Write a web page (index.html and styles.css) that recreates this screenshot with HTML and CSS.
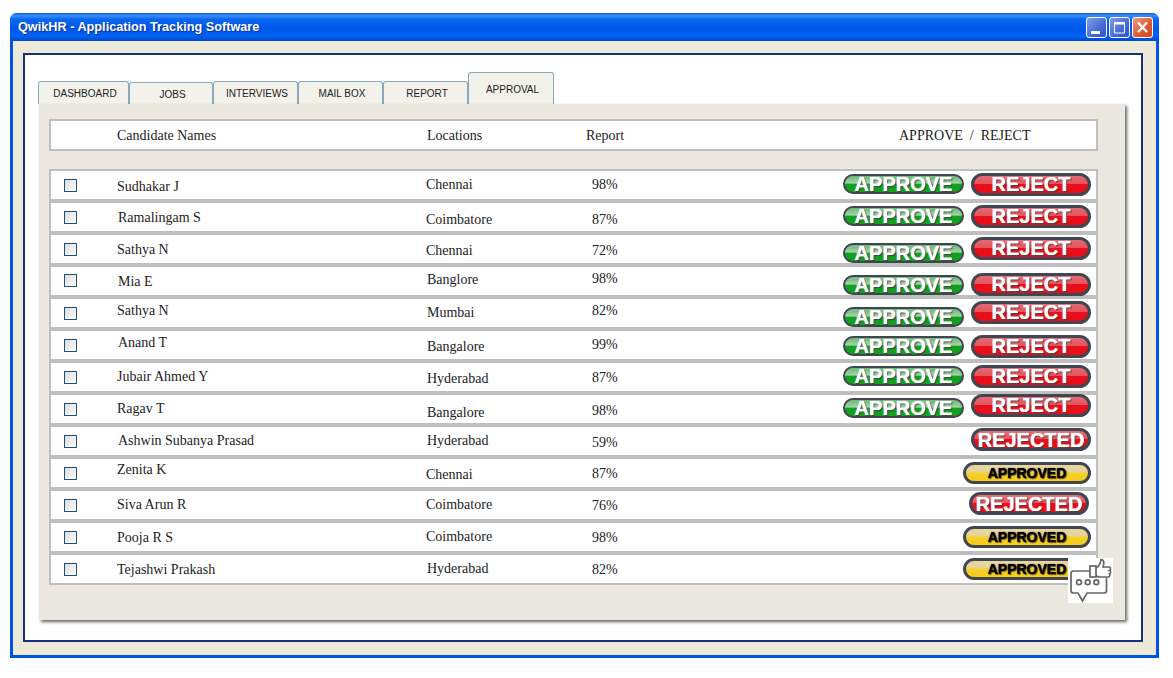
FILE: index.html
```html
<!DOCTYPE html>
<html lang="en">
<head>
    <meta charset="UTF-8">
    <title>QwikHR - Application Tracking Software</title>
    <link rel="stylesheet" href="styles.css">
</head>
<body>

<div class="window">
    <div class="titlebar">
        <span class="title">QwikHR - Application Tracking Software</span>
        <div class="win-buttons">
            <span class="win-btn"><svg width="19" height="19" viewBox="0 0 19 19"><rect x="4" y="13" width="9" height="3" fill="#fff"/></svg></span>
            <span class="win-btn"><svg width="19" height="19" viewBox="0 0 19 19"><path d="M4.5 5h10v10h-10z" fill="none" stroke="#fff"/><rect x="4" y="4" width="11" height="2.5" fill="#fff"/></svg></span>
            <span class="win-btn close"><svg width="19" height="19" viewBox="0 0 19 19"><path d="M5 4.5l9 9.5M14 4.5l-9 9.5" stroke="#fff" stroke-width="2.2"/></svg></span>
        </div>
    </div>

    <div class="content">
        <nav class="tabs">
            <a class="tab t-dashboard">DASHBOARD</a>
            <a class="tab t-jobs">JOBS</a>
            <a class="tab">INTERVIEWS</a>
            <a class="tab">MAIL BOX</a>
            <a class="tab">REPORT</a>
            <a class="tab active">APPROVAL</a>
        </nav>

        <div class="panel">
            <div class="list-head">
                <span>Candidate Names</span>
                <span>Locations</span>
                <span>Report</span>
                <span class="head-action">APPROVE &nbsp;/&nbsp; REJECT</span>
            </div>

            <div class="list">
                <div class="row">
                    <input type="checkbox" class="check">
                    <span class="mt7">Sudhakar J</span><span class="mt5">Chennai</span><span class="mt5">98%</span>
                    <div class="actions"><span class="pill approve mt3">APPROVE</span><span class="pill reject mt2">REJECT</span></div>
                </div>
                <div class="row">
                    <input type="checkbox" class="check">
                    <span class="mt6 x1">Ramalingam S</span><span class="mt8">Coimbatore</span><span class="mt8">87%</span>
                    <div class="actions"><span class="pill approve mt3">APPROVE</span><span class="pill reject mt2">REJECT</span></div>
                </div>
                <div class="row">
                    <input type="checkbox" class="check">
                    <span class="mt6">Sathya N</span><span class="mt7">Chennai</span><span class="mt7">72%</span>
                    <div class="actions"><span class="pill approve mt8">APPROVE</span><span class="pill reject mt2">REJECT</span></div>
                </div>
                <div class="row">
                    <input type="checkbox" class="check check-up">
                    <span class="mt6 x1">Mia E</span><span class="mt4 x1">Banglore</span><span class="mt3">98%</span>
                    <div class="actions"><span class="pill approve mt8">APPROVE</span><span class="pill reject mt6">REJECT</span></div>
                </div>
                <div class="row">
                    <input type="checkbox" class="check">
                    <span class="mt3">Sathya N</span><span class="mt5 x1">Mumbai</span><span class="mt3">82%</span>
                    <div class="actions"><span class="pill approve mt8">APPROVE</span><span class="pill reject mt2">REJECT</span></div>
                </div>
                <div class="row">
                    <input type="checkbox" class="check">
                    <span class="mt3 x1">Anand T</span><span class="mt7 x1">Bangalore</span><span class="mt5">99%</span>
                    <div class="actions"><span class="pill approve mt5">APPROVE</span><span class="pill reject mt4">REJECT</span></div>
                </div>
                <div class="row">
                    <input type="checkbox" class="check">
                    <span class="mt5">Jubair Ahmed Y</span><span class="mt7 x1">Hyderabad</span><span class="mt6">87%</span>
                    <div class="actions"><span class="pill approve mt3">APPROVE</span><span class="pill reject mt2">REJECT</span></div>
                </div>
                <div class="row">
                    <input type="checkbox" class="check">
                    <span class="mt5">Ragav T</span><span class="mt9 x1">Bangalore</span><span class="mt7">98%</span>
                    <div class="actions"><span class="pill approve mt3">APPROVE</span><span class="pill reject up1">REJECT</span></div>
                </div>
                <div class="row">
                    <input type="checkbox" class="check">
                    <span class="mt5 x1">Ashwin Subanya Prasad</span><span class="mt5 x1">Hyderabad</span><span class="mt7">59%</span>
                    <div class="actions"><span class="pill rejected mt1">REJECTED</span></div>
                </div>
                <div class="row">
                    <input type="checkbox" class="check">
                    <span class="mt2">Zenita K</span><span class="mt7">Chennai</span><span class="mt6">87%</span>
                    <div class="actions"><span class="pill approved mt3">APPROVED</span></div>
                </div>
                <div class="row">
                    <input type="checkbox" class="check">
                    <span class="mt5">Siva Arun R</span><span class="mt5">Coimbatore</span><span class="mt6">76%</span>
                    <div class="actions"><span class="pill rejected mt1 shift">REJECTED</span></div>
                </div>
                <div class="row">
                    <input type="checkbox" class="check">
                    <span class="mt6">Pooja R S</span><span class="mt5">Coimbatore</span><span class="mt6">98%</span>
                    <div class="actions"><span class="pill approved mt3">APPROVED</span></div>
                </div>
                <div class="row">
                    <input type="checkbox" class="check">
                    <span class="mt6">Tejashwi Prakash</span><span class="mt5 x1">Hyderabad</span><span class="mt6">82%</span>
                    <div class="actions"><span class="pill approved mt3">APPROVED</span></div>
                </div>
            </div>

            <!-- feedback icon sits over the last row -->
            <div class="feedback">
                <svg width="45" height="45" viewBox="0 0 45 45" fill="none" stroke="#666" stroke-width="1.7">
                    <path d="M22 13H5.5A2.5 2.5 0 0 0 3 15.5V32.500A2.500 2.500 0 0 0 5.500 35H10L14.500 43 19 35H36A2.500 2.500 0 0 0 38.500 32.500V20"/>
                    <circle cx="11" cy="24.300" r="2.400"/>
                    <circle cx="19.700" cy="24.300" r="2.400"/>
                    <circle cx="28.300" cy="24.300" r="2.400"/>
                    <rect x="22" y="8" width="6" height="11"/>
                    <path d="M28 10C31 8.500 32.500 6 33 1.500C36 1.500 36.500 5 35 9H41C43 9 43 12 41.500 12.500C43 13 43 15.500 41.500 16C42.500 17 41.500 19 40 19H32C30 19 29 18 28 17.500"/>
                </svg>
            </div>
        </div>
    </div>
</div>

</body>
</html>
```

FILE: styles.css
```css
html, body {
    margin: 0;
    padding: 0;
    background-color: #fff;
    overflow: hidden;
}
body {
    padding: 13px 14px 20px 10px;
    font-family: "Liberation Serif", "Times New Roman", serif;
    font-size: 14px;
    color: #222;
}

/* outer XP style window */
.window {
    width: 1149px;
    height: 645px;
    box-sizing: border-box;
    display: flex;
    flex-direction: column;
    background-color: #ece9d8;
    border: solid #0053e4;
    border-width: 0 3px 3px 3px;
    border-radius: 7px 7px 0 0;
}
.titlebar {
    height: 28px;
    margin: 0 -3px;
    padding: 0 6px 0 8px;
    display: flex;
    align-items: center;
    justify-content: space-between;
    flex-shrink: 0;
    border-radius: 7px 7px 0 0;
    background: linear-gradient(to bottom, #0a5be0 0%, #3a8ff7 10%, #0a66f2 22%, #0058ea 55%, #0062f5 82%, #0048d0 100%);
}
.title {
    font-family: "Liberation Sans", Arial, sans-serif;
    font-weight: bold;
    font-size: 12.7px;
    color: #fff;
    text-shadow: 1px 1px 1px #0f2f90;
}
.win-buttons {
    display: flex;
    gap: 2px;
}
.win-btn {
    width: 19px;
    height: 19px;
    border: 1px solid #fff;
    border-radius: 3px;
    display: block;
    background: linear-gradient(135deg, #7f9fe8, #3c62d6 70%, #3458cc);
}
.win-btn svg {
    display: block;
}
.win-btn.close {
    background: linear-gradient(135deg, #eb9c82, #dd5a32 60%, #cf4420);
}

/* white area inside the window */
.content {
    flex: 1;
    margin: 12px 13px 13px 10px;
    padding: 17px 17px 20px 13px;
    background-color: #fff;
    border: 2px solid #1a2f80;
}

.tabs {
    display: flex;
    align-items: flex-end;
    height: 32px;
}
.tab {
    box-sizing: border-box;
    width: 85px;
    height: 23px;
    padding: 5px 0 0 3px;
    text-align: center;
    font-family: "Liberation Sans", Arial, sans-serif;
    font-size: 10px;
    line-height: 14px;
    color: #222;
    background-color: #f3f2ea;
    border: 1px solid #8aa8bc;
    border-bottom: none;
    border-radius: 3px 3px 0 0;
}
.t-dashboard {
    width: 91px;
}
.t-jobs {
    width: 84px;
    height: 22px;
}
.tab.active {
    width: 86px;
    height: 32px;
    padding-top: 10px;
}

.panel {
    position: relative;
    box-sizing: border-box;
    width: 1086px;
    height: 516px;
    margin-left: 1px;
    padding: 15px 27px 0 10px;
    background-color: #ebe8e1;
    box-shadow: 2px 2px 3px #666;
}

.list-head {
    height: 26px;
    margin-bottom: 18px;
    display: grid;
    grid-template-columns: 310px 159px 313px auto;
    padding: 2px 0 0 66px;
    align-items: center;
    line-height: 16px;
    background-color: #fff;
    border: 2px solid #bfbfbf;
}

.list {
    display: flex;
    flex-direction: column;
    gap: 4px;
    background-color: #bfbfbf;
    border: 2px solid #bfbfbf;
}
.row {
    height: 28px;
    display: grid;
    grid-template-columns: 53px 309px 166px 39px 1fr;
    align-items: start;
    padding-left: 13px;
    line-height: 18px;
    white-space: nowrap;
    background-color: #fff;
}
.check {
    appearance: none;
    box-sizing: border-box;
    width: 13px;
    height: 13px;
    margin: 8px 0 0 0;
    border: 1px solid #1c5180;
    background: linear-gradient(135deg, #dcdcd7, #fff);
}
.check-up {
    margin-top: 7px;
}

.actions {
    display: flex;
    justify-content: flex-end;
    align-items: flex-start;
    gap: 7px;
    padding-right: 5px;
    line-height: 16px;
}

.pill {
    box-sizing: border-box;
    display: block;
    border: 3px solid #414650;
    border-radius: 12px;
    text-align: center;
    font-family: "Liberation Sans", Arial, sans-serif;
    font-weight: bold;
    font-size: 20px;
    color: #fff;
    text-shadow: 0 0 1px #fff, 1px 1px 1px #333;
}
.approve {
    width: 121px;
    height: 20px;
    border-width: 2px;
    line-height: 17px;
    background: linear-gradient(to bottom, #6cb878 0%, #a4d4aa 45%, #12a01e 50%, #12a01e 100%);
}
.reject {
    width: 120px;
    height: 23px;
    line-height: 16px;
    background: linear-gradient(to bottom, #e56b74 0%, #e2545e 45%, #e80f18 50%, #e80f18 100%);
}
.rejected {
    width: 120px;
    height: 23px;
    line-height: 18px;
    background: linear-gradient(to bottom, #e67078 0%, #e2545e 45%, #e80f18 50%, #e80f18 100%);
}
.approved {
    width: 128px;
    height: 22px;
    font-size: 14px;
    line-height: 16px;
    color: #000;
    text-shadow: 0 0 1px #000, 1px 1px 1px #6b5a10;
    background: linear-gradient(to bottom, #e8d7a4 0%, #e6d29a 45%, #f8d020 50%, #f6cc1c 100%);
}
.shift {
    margin-right: 2px;
}

/* mockup rows are not quite aligned, these keep the offsets */
.up1 { margin-top: -1px; }
.mt1 { margin-top: 1px; }
.mt2 { margin-top: 2px; }
.mt3 { margin-top: 3px; }
.mt4 { margin-top: 4px; }
.mt5 { margin-top: 5px; }
.mt6 { margin-top: 6px; }
.mt7 { margin-top: 7px; }
.mt8 { margin-top: 8px; }
.mt9 { margin-top: 9px; }
.x1 { margin-left: 1px; }

.feedback {
    position: absolute;
    right: 12px;
    bottom: 17px;
    width: 45px;
    height: 45px;
    background-color: #fff;
}
.feedback svg {
    display: block;
}
```
